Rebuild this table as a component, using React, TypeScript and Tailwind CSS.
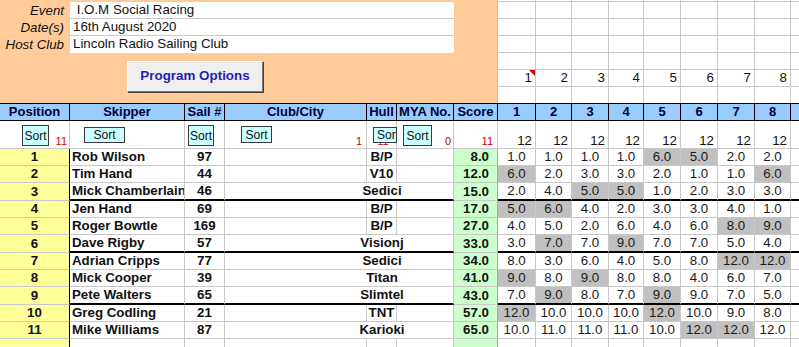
import React from "react";

const G = "border-r-[#c8c8c8]";
const raceWCls = ["w-[38px]", "w-[36px]", "w-[37px]", "w-[35px]", "w-[37px]", "w-[37px]", "w-[37px]", "w-[36px]"];

type Row = { pos: number; name: string; sail: string; hull: string; wide: boolean; score: string; r: string[]; thick?: boolean };

const rows: Row[] = [
  { pos: 1, name: "Rob Wilson", sail: "97", hull: "B/P", wide: false, score: "8.0", r: ["1.0", "1.0", "1.0", "1.0", "*6.0", "*5.0", "2.0", "2.0"] },
  { pos: 2, name: "Tim Hand", sail: "44", hull: "V10", wide: false, score: "12.0", r: ["*6.0", "2.0", "3.0", "3.0", "2.0", "1.0", "1.0", "*6.0"] },
  { pos: 3, name: "Mick Chamberlain", sail: "46", hull: "Sedici", wide: true, score: "15.0", r: ["2.0", "4.0", "*5.0", "*5.0", "1.0", "2.0", "3.0", "3.0"], thick: true },
  { pos: 4, name: "Jen Hand", sail: "69", hull: "B/P", wide: false, score: "17.0", r: ["*5.0", "*6.0", "4.0", "2.0", "3.0", "3.0", "4.0", "1.0"] },
  { pos: 5, name: "Roger Bowtle", sail: "169", hull: "B/P", wide: false, score: "27.0", r: ["4.0", "5.0", "2.0", "6.0", "4.0", "6.0", "*8.0", "*9.0"] },
  { pos: 6, name: "Dave Rigby", sail: "57", hull: "Visionj", wide: true, score: "33.0", r: ["3.0", "*7.0", "7.0", "*9.0", "7.0", "7.0", "5.0", "4.0"], thick: true },
  { pos: 7, name: "Adrian Cripps", sail: "77", hull: "Sedici", wide: true, score: "34.0", r: ["8.0", "3.0", "6.0", "4.0", "5.0", "8.0", "*12.0", "*12.0"] },
  { pos: 8, name: "Mick Cooper", sail: "39", hull: "Titan", wide: true, score: "41.0", r: ["*9.0", "8.0", "*9.0", "8.0", "8.0", "4.0", "6.0", "7.0"] },
  { pos: 9, name: "Pete Walters", sail: "65", hull: "Slimtel", wide: true, score: "43.0", r: ["7.0", "*9.0", "8.0", "7.0", "*9.0", "9.0", "7.0", "5.0"], thick: true },
  { pos: 10, name: "Greg Codling", sail: "21", hull: "TNT", wide: false, score: "57.0", r: ["*12.0", "10.0", "10.0", "10.0", "*12.0", "10.0", "9.0", "8.0"] },
  { pos: 11, name: "Mike Williams", sail: "87", hull: "Karioki", wide: true, score: "65.0", r: ["10.0", "11.0", "11.0", "11.0", "10.0", "*12.0", "*12.0", "12.0"] },
];

function bb(thick?: boolean) {
  return thick ? "border-b-2 border-b-black" : "border-b border-b-[#c8c8c8]";
}

function SortBtn({ cls, clip }: { cls: string; clip?: boolean }) {
  return (
    <div
      className={`${cls} box-border border border-[#3a3a3a] bg-[#CCFFFF] text-[12px] leading-none text-[#111] flex ${
        clip ? "items-start justify-start pl-[3px] pt-[1px] overflow-hidden" : "items-center justify-center"
      }`}
    >
      <span className="whitespace-nowrap">Sort</span>
    </div>
  );
}

function Red({ t, cls = "" }: { t: string; cls?: string }) {
  return <span className={`text-[11px] leading-[13px] text-[#cc0000] ${cls}`}>{t}</span>;
}

export default function App() {
  return (
    <div className="w-[799px] h-[347px] overflow-hidden bg-white font-['Liberation_Sans',Arial,sans-serif] text-[13.3px] text-[#111]">
      {/* Top area */}
      <div className="flex h-[103px]">
        <div className="w-[498px] h-full bg-[#FFCC99] border-r border-r-[#c0c0c0] box-border pt-[2px]">
          {[
            ["Event", "\u00a0I.O.M Social Racing"],
            ["Date(s)", "16th August 2020"],
            ["Host Club", "Lincoln Radio Sailing Club"],
          ].map(([l, v], i) => (
            <div key={l} className="flex h-[17px]">
              <div className="w-[70px] pr-[6px] text-right italic leading-[17px] whitespace-nowrap">{l}</div>
              <div
                className={`w-[384px] bg-white pl-[3px] leading-[16px] box-border ${
                  i < 2 ? "border-b border-b-[#c8c8c8]" : ""
                }`}
              >
                {v}
              </div>
            </div>
          ))}
          <div className="ml-[127px] mt-[8px] w-[136px] h-[31px] box-border bg-[#EFEFEF] border border-t-white border-l-white border-r-[#7a7a7a] border-b-[#7a7a7a] shadow-[1px_1px_0_#404040] flex items-center justify-center">
            <span className="font-bold text-[13.4px] text-[#1f1fb0]">Program Options</span>
          </div>
        </div>
        <div className="flex-1 flex flex-col">
          {[2, 17, 17, 17, 17, 17, 16].map((h, ri) => (
            <div key={ri} className={`flex box-border ${ri < 6 ? "border-b border-b-[#c8c8c8]" : ""}`} style={{ height: h }}>
              {raceWCls.map((w, ci) => (
                <div key={ci} className={`${w} h-full box-border border-r ${G} relative flex items-center justify-end pr-[3px]`}>
                  {ri === 5 ? <span className="leading-none">{ci + 1}</span> : null}
                  {ri === 5 && ci === 0 ? (
                    <svg className="absolute top-0 right-0" width="6" height="6" viewBox="0 0 6 6">
                      <polygon points="0,0 6,0 6,6" fill="#e00000" />
                    </svg>
                  ) : null}
                </div>
              ))}
              <div className="flex-1 h-full" />
            </div>
          ))}
        </div>
      </div>

      {/* Header row */}
      <div className="flex h-[18px] box-border border-y border-black bg-[#99CCFF] font-bold text-[#000033] leading-[16px] text-[13px]">
        {[
          ["Position", "w-[70px]"],
          ["Skipper", "w-[115px]"],
          ["Sail #", "w-[40px]"],
          ["Club/City", "w-[142px]"],
          ["Hull", "w-[30px]"],
          ["MYA No.", "w-[57px]"],
          ["Score", "w-[44px]"],
        ].map(([t, w]) => (
          <div key={t} className={`${w} box-border border-r border-r-black text-center whitespace-nowrap overflow-hidden`}>
            {t}
          </div>
        ))}
        {raceWCls.map((w, i) => (
          <div key={i} className={`${w} box-border border-r border-r-black text-center`}>
            {i + 1}
          </div>
        ))}
        <div className="flex-1" />
      </div>

      {/* Sort row */}
      <div className="flex h-[28px] box-border border-b border-b-[#c8c8c8]">
        <div className={`w-[70px] h-full box-border border-r ${G} flex items-start`}>
          <SortBtn cls="ml-[22px] mt-[4px] w-[27px] h-[21px]" />
          <Red t="11" cls="ml-auto self-end pr-[2px]" />
        </div>
        <div className={`w-[115px] h-full box-border border-r ${G} flex items-start`}>
          <SortBtn cls="ml-[14px] mt-[6px] w-[41px] h-[16px]" />
        </div>
        <div className={`w-[40px] h-full box-border border-r ${G} flex items-start`}>
          <SortBtn cls="ml-[3px] mt-[4px] w-[26px] h-[21px]" />
        </div>
        <div className={`w-[142px] h-full box-border border-r ${G} flex items-start`}>
          <SortBtn cls="ml-[16px] mt-[5px] w-[31px] h-[17px]" />
          <Red t="1" cls="ml-auto self-end pr-[4px]" />
        </div>
        <div className={`w-[30px] h-full box-border border-r ${G} relative flex items-end justify-center`}>
          <Red t="11" cls="pl-[3px]" />
          <div className="absolute left-[6px] top-[6px]">
            <SortBtn cls="w-[24px] h-[16px]" clip />
          </div>
        </div>
        <div className={`w-[57px] h-full box-border border-r ${G} flex items-start`}>
          <SortBtn cls="ml-[6px] mt-[4px] w-[29px] h-[21px]" />
          <Red t="0" cls="ml-auto self-end pr-[2px]" />
        </div>
        <div className={`w-[44px] h-full box-border border-r ${G} flex items-end justify-end pr-[4px]`}>
          <Red t="11" />
        </div>
        {raceWCls.map((w, i) => (
          <div key={i} className={`${w} h-full box-border border-r ${G} flex items-end justify-end pr-[3px]`}>
            <span className="leading-[14px]">12</span>
          </div>
        ))}
        <div className="flex-1" />
      </div>

      {/* Data rows */}
      {rows.map((r) => (
        <div key={r.pos} className={`flex ${r.thick ? "h-[18px]" : "h-[17px]"}`}>
          <div className="w-[70px] h-full box-border bg-[#FFFF99] border-r border-r-black border-b border-b-[#c8c8c8] flex items-center justify-center font-bold">
            {r.pos}
          </div>
          <div className={`w-[115px] h-full box-border border-r ${G} ${bb(r.thick)} flex items-center pl-[2px] font-bold whitespace-nowrap overflow-hidden`}>
            {r.name}
          </div>
          <div className={`w-[40px] h-full box-border border-r ${G} ${bb(r.thick)} flex items-center justify-center font-bold`}>
            {r.sail}
          </div>
          <div className={`w-[142px] h-full box-border ${r.wide ? "" : `border-r ${G}`} ${bb(r.thick)}`} />
          <div className={`w-[30px] h-full box-border ${r.wide ? "" : `border-r ${G}`} ${bb(r.thick)} flex items-center justify-center font-bold whitespace-nowrap`}>
            <span className="shrink-0">{r.hull}</span>
          </div>
          <div className={`w-[57px] h-full box-border border-r ${G} ${bb(r.thick)}`} />
          <div className="w-[44px] h-full box-border bg-[#CCFFCC] border-r border-r-[#a8a8a8] border-b border-b-[#c8c8c8] flex items-center justify-end pr-[8px] font-bold">
            {r.score}
          </div>
          {r.r.map((v, i) => {
            const gray = v.startsWith("*");
            return (
              <div
                key={i}
                className={`${raceWCls[i]} h-full box-border border-r ${G} ${bb(r.thick)} ${gray ? "bg-[#C0C0C0]" : ""} flex items-center justify-center text-[#1a1a1a]`}
              >
                {gray ? v.slice(1) : v}
              </div>
            );
          })}
          <div className={`flex-1 h-full box-border ${bb(r.thick)}`} />
        </div>
      ))}
      <div className="flex h-[17px]">
        <div className="w-[70px] h-full box-border bg-[#FFFF99] border-r border-r-black" />
        <div className={`w-[115px] h-full box-border border-r ${G}`} />
        <div className={`w-[40px] h-full box-border border-r ${G}`} />
        <div className={`w-[142px] h-full box-border border-r ${G}`} />
        <div className={`w-[30px] h-full box-border border-r ${G}`} />
        <div className={`w-[57px] h-full box-border border-r ${G}`} />
        <div className="w-[44px] h-full box-border bg-[#CCFFCC] border-r border-r-[#a8a8a8]" />
        {raceWCls.map((w, i) => (
          <div key={i} className={`${w} h-full box-border border-r ${G}`} />
        ))}
      </div>
    </div>
  );
}
